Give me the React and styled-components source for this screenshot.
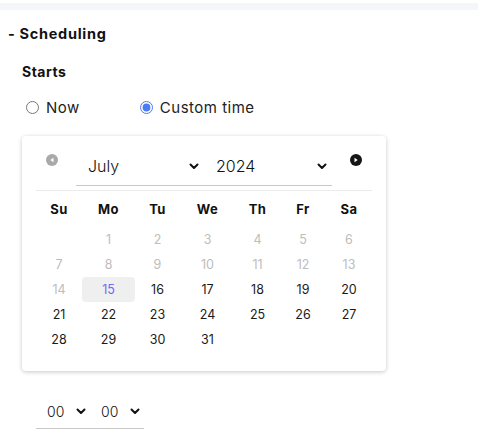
import React from "react";
import styled, { createGlobalStyle } from "styled-components";

const Global = createGlobalStyle`
  html, body { margin: 0; padding: 0; background: #fff; }
  body { font-family: "Inter", "Noto Sans", sans-serif; color: #111; }
`;

const Page = styled.div`
  width: 478px;
  height: 436px;
  overflow: hidden;
  padding-top: 3px;
  box-sizing: border-box;
`;

const TopBand = styled.div`
  height: 7px;
  background: #f5f6fa;
`;

const Section = styled.section`
  padding: 14px 0 0 8px;
`;

const SectionTitle = styled.h2`
  margin: 0;
  font-size: 14.5px;
  line-height: 20px;
  font-weight: 700;
  letter-spacing: 0.7px;
`;

const Body = styled.div`
  padding: 18px 0 0 14px;
`;

const Label = styled.h3`
  margin: 0;
  font-size: 14px;
  line-height: 20px;
  font-weight: 700;
  letter-spacing: 0.5px;
`;

const RadioRow = styled.div`
  display: flex;
  align-items: center;
  gap: 60px;
  margin-top: 15px;
  padding-left: 4px;
  height: 20px;
`;

const RadioLabel = styled.label`
  display: flex;
  align-items: center;
  gap: 7px;
  font-size: 15px;
  letter-spacing: 0.5px;
  color: #222;
`;

const Radio = styled.input`
  margin: 0;
  width: 13px;
  height: 13px;
  accent-color: #4a7cf7;
`;

const Card = styled.div`
  margin-top: 19px;
  width: 364px;
  height: 235px;
  box-sizing: border-box;
  border-radius: 4px;
  background: #fff;
  box-shadow: 0 1px 4px rgba(0, 0, 0, 0.22);
  padding: 17px 14px 0;
`;

const Header = styled.div`
  display: flex;
  justify-content: space-between;
  align-items: flex-start;
  padding: 0 10px;
`;

const ArrowBtn = styled.div`
  width: 12px;
  height: 12px;
  border-radius: 50%;
  background: ${(p) => (p.$muted ? "#a9a9a9" : "#151515")};
  display: flex;
  align-items: center;
  justify-content: center;
  margin-top: 1px;
`;

const SelectGroup = styled.div`
  display: flex;
  width: 256px;
  border-bottom: 1px solid #c8c8c8;
  height: 33px;
  box-sizing: border-box;
`;

const Select = styled.div`
  display: flex;
  align-items: center;
  justify-content: space-between;
  width: ${(p) => p.$w}px;
  padding: 0 ${(p) => p.$pr}px 6px ${(p) => p.$pl}px;
  box-sizing: border-box;
  font-size: 16px;
  font-weight: 300;
  color: #111;
`;

const Divider = styled.div`
  height: 1px;
  background: #ececec;
  margin-top: 4px;
`;

const Grid = styled.div`
  display: grid;
  grid-template-columns: 46px 53px 45px 55px 45px 46px 46px;
  grid-auto-rows: 25px;
`;

const WeekHead = styled(Grid)`
  margin-top: 5px;
  grid-auto-rows: 26px;
  margin-bottom: 5px;
`;

const DayName = styled.div`
  display: flex;
  align-items: center;
  justify-content: center;
  font-size: 13px;
  font-weight: 700;
  letter-spacing: 0.4px;
  color: #111;
`;

const Day = styled.div`
  display: flex;
  align-items: center;
  justify-content: center;
  font-size: 12.5px;
  font-weight: 400;
  border-radius: 4px;
  color: ${(p) => (p.$selected ? "#6b6bf5" : p.$disabled ? "#bdbdbd" : "#1a1a1a")};
  background: ${(p) => (p.$selected ? "#efefef" : "transparent")};
`;

const TimeRow = styled.div`
  display: flex;
  margin-top: 27px;
  margin-left: 14px;
  width: 108px;
  border-bottom: 1px solid #c8c8c8;
  height: 31px;
  box-sizing: border-box;
`;

const TimeSelect = styled.div`
  display: flex;
  align-items: center;
  gap: 12px;
  width: 54px;
  padding: 0 0 3px 11px;
  box-sizing: border-box;
  font-size: 14px;
  font-weight: 300;
  color: #111;
`;

const Chevron = () => (
  <svg width="10" height="7" viewBox="0 0 10 7">
    <path d="M1.5 1.5 L5 5 L8.5 1.5" fill="none" stroke="#111" strokeWidth="2" strokeLinecap="round" strokeLinejoin="round" />
  </svg>
);

const Tri = ({ dir }) => (
  <svg width="6" height="6" viewBox="0 0 6 6">
    {dir === "left" ? <path d="M4.5 0.8 L1.3 3 L4.5 5.2 Z" fill="#fff" /> : <path d="M1.5 0.8 L4.7 3 L1.5 5.2 Z" fill="#fff" />}
  </svg>
);

const days = [{ n: "", k: "e0" }];
for (let d = 1; d <= 31; d++) days.push({ n: d, k: d });

export default function App() {
  return (
    <Page>
      <Global />
      <TopBand />
      <Section>
        <SectionTitle>- Scheduling</SectionTitle>
        <Body>
          <Label>Starts</Label>
          <RadioRow>
            <RadioLabel>
              <Radio type="radio" name="start" />
              Now
            </RadioLabel>
            <RadioLabel>
              <Radio type="radio" name="start" defaultChecked />
              Custom time
            </RadioLabel>
          </RadioRow>
          <Card>
            <Header>
              <ArrowBtn $muted>
                <Tri dir="left" />
              </ArrowBtn>
              <SelectGroup>
                <Select $w={130} $pl={12} $pr={7}>
                  <span>July</span>
                  <Chevron />
                </Select>
                <Select $w={126} $pl={10} $pr={5}>
                  <span>2024</span>
                  <Chevron />
                </Select>
              </SelectGroup>
              <ArrowBtn>
                <Tri dir="right" />
              </ArrowBtn>
            </Header>
            <Divider />
            <WeekHead>
              {["Su", "Mo", "Tu", "We", "Th", "Fr", "Sa"].map((d) => (
                <DayName key={d}>{d}</DayName>
              ))}
            </WeekHead>
            <Grid>
              {days.map((d) => (
                <Day key={d.k} $disabled={d.n !== "" && d.n < 15} $selected={d.n === 15}>
                  {d.n}
                </Day>
              ))}
            </Grid>
          </Card>
          <TimeRow>
            <TimeSelect>
              <span>00</span>
              <Chevron />
            </TimeSelect>
            <TimeSelect>
              <span>00</span>
              <Chevron />
            </TimeSelect>
          </TimeRow>
        </Body>
      </Section>
    </Page>
  );
}
